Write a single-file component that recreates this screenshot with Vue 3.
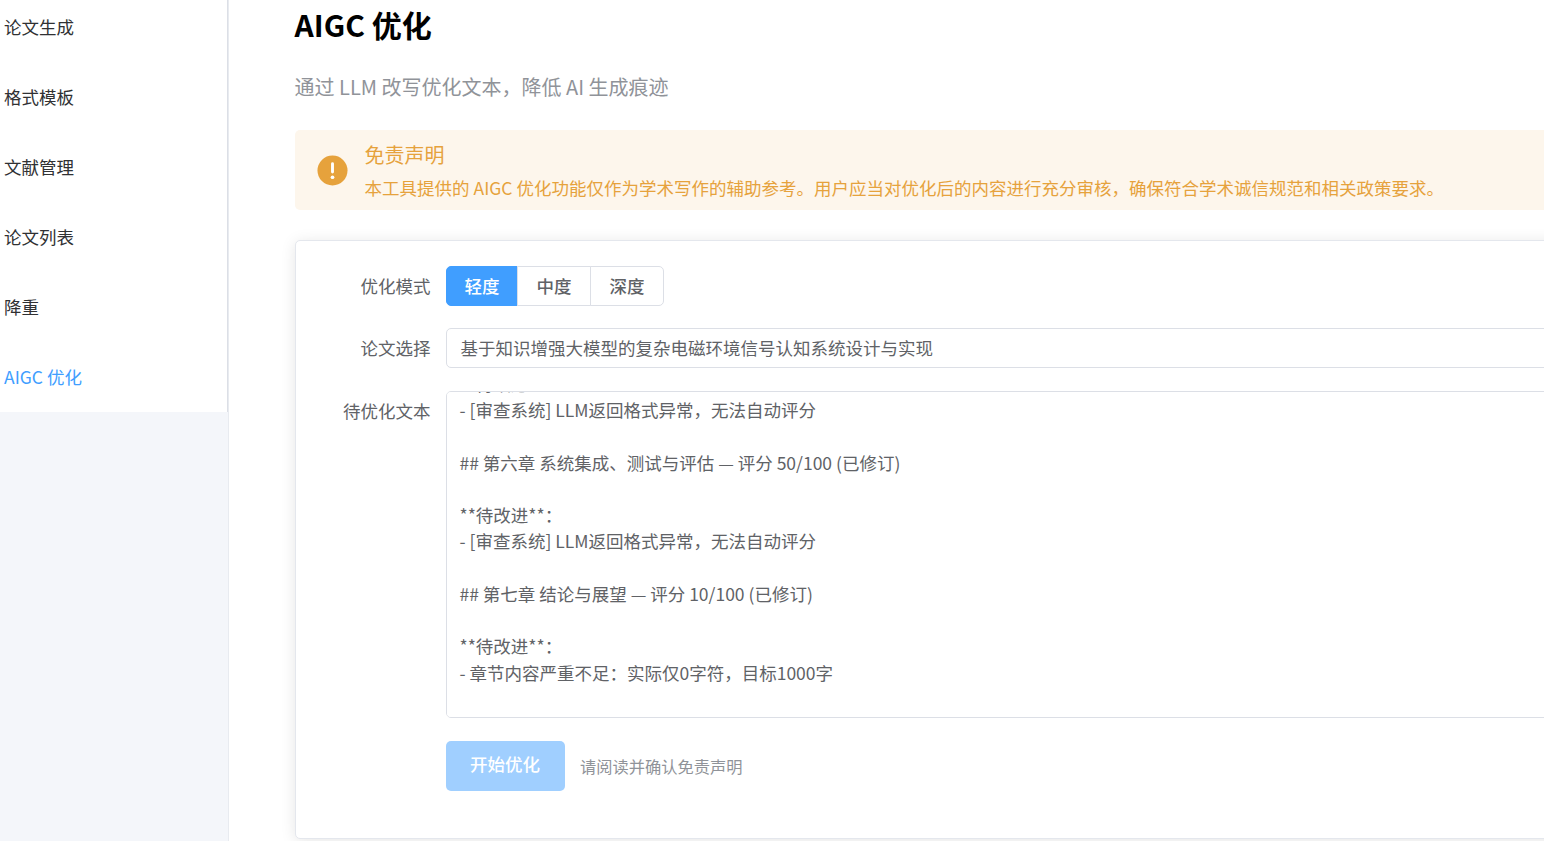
<template>
  <div class="layout">
    <!-- 侧边栏 -->
    <aside class="sidebar">
      <ul class="menu">
        <li
          v-for="item in menuItems"
          :key="item"
          class="menu-item"
          :class="{ 'is-active': item === activeMenu }"
        >
          {{ item }}
        </li>
      </ul>
    </aside>

    <!-- 主内容 -->
    <main class="main">
      <div class="page">
        <h1 class="page-title">AIGC 优化</h1>
        <p class="page-desc">通过 LLM 改写优化文本，降低 AI 生成痕迹</p>

        <div class="alert">
          <svg class="alert-icon" viewBox="0 0 32 32" aria-hidden="true">
            <circle cx="16" cy="16" r="15.5" fill="#e6a23c" />
            <rect x="14.5" y="7.5" width="3" height="11.5" rx="1.5" fill="#fff" />
            <circle cx="16" cy="23" r="1.9" fill="#fff" />
          </svg>
          <div class="alert-body">
            <div class="alert-title">免责声明</div>
            <div class="alert-text">
              本工具提供的 AIGC 优化功能仅作为学术写作的辅助参考。用户应当对优化后的内容进行充分审核，确保符合学术诚信规范和相关政策要求。
            </div>
          </div>
        </div>

        <div class="card">
          <div class="form-row">
            <label class="form-label">优化模式</label>
            <div class="segment">
              <button
                v-for="mode in modes"
                :key="mode"
                class="segment-btn"
                :class="{ 'is-active': mode === activeMode }"
                @click="activeMode = mode"
              >
                {{ mode }}
              </button>
            </div>
          </div>

          <div class="form-row form-row--select">
            <label class="form-label">论文选择</label>
            <div class="select">基于知识增强大模型的复杂电磁环境信号认知系统设计与实现</div>
          </div>

          <div class="form-row form-row--text">
            <label class="form-label">待优化文本</label>
            <textarea ref="textareaRef" v-model="content" class="textarea" rows="12"></textarea>
          </div>

          <div class="form-row form-row--last">
            <button class="submit-btn" disabled>开始优化</button>
            <span class="hint">请阅读并确认免责声明</span>
          </div>
        </div>
      </div>
    </main>
  </div>
</template>

<script setup>
import { onMounted, ref } from 'vue'

const menuItems = ['论文生成', '格式模板', '文献管理', '论文列表', '降重', 'AIGC 优化']
const activeMenu = 'AIGC 优化'

const modes = ['轻度', '中度', '深度']
const activeMode = ref('轻度')

const textareaRef = ref(null)
const content = ref(`
**待改进**：
- [审查系统] LLM返回格式异常，无法自动评分

## 第六章 系统集成、测试与评估 — 评分 50/100 (已修订)

**待改进**：
- [审查系统] LLM返回格式异常，无法自动评分

## 第七章 结论与展望 — 评分 10/100 (已修订)

**待改进**：
- 章节内容严重不足：实际仅0字符，目标1000字
`)

// 文本框默认滚动到底部
onMounted(() => {
  textareaRef.value.scrollTop = textareaRef.value.scrollHeight
})
</script>

<style>
html,
body {
  margin: 0;
  height: 100%;
  overflow: hidden;
  background: #fff;
}
</style>

<style scoped>
.layout {
  display: flex;
  height: 841px;
  overflow: hidden;
  font-family: "Noto Sans CJK SC", "Noto Sans", sans-serif;
  font-size: 17.5px;
  color: #606266;
}

/* 侧边栏 */
.sidebar {
  flex: 0 0 229px;
  overflow: hidden;
  background: #f4f6fa;
  border-right: 1px solid #e8ebf0;
  box-sizing: border-box;
}

.menu {
  list-style: none;
  margin: -8px 0 0;
  padding: 0;
  background: #fff;
  border-right: 1.5px solid #dcdfe6;
}

.menu-item {
  height: 70px;
  line-height: 70px;
  padding-left: 4px;
  color: #303133;
}

.menu-item.is-active {
  color: #409eff;
}

/* 主内容 */
.main {
  flex: 1;
  min-width: 0;
  overflow: hidden;
}

.page {
  width: 1400px;
  padding-left: 65.6px;
}

.page-title {
  margin: 0;
  padding-top: 2px;
  font-size: 30px;
  line-height: 44px;
  font-weight: 700;
  color: #000;
}

.page-desc {
  margin: 26px 0 0;
  font-size: 20px;
  line-height: 29px;
  color: #909399;
}

/* 提示条 */
.alert {
  display: flex;
  align-items: center;
  gap: 17px;
  height: 80px;
  margin-top: 29px;
  padding-left: 22px;
  box-sizing: border-box;
  background: #fdf6ec;
  border-radius: 5px;
  color: #e6a23c;
}

.alert-icon {
  flex: none;
  width: 31px;
  height: 31px;
}

.alert-title {
  font-size: 20px;
  line-height: 30px;
}

.alert-text {
  margin-top: 5px;
  line-height: 26px;
}

/* 表单卡片 */
.card {
  margin-top: 30px;
  padding: 25px;
  box-sizing: border-box;
  background: #fff;
  border: 1px solid #e4e7ed;
  border-radius: 5px;
  box-shadow: 0 2px 15px rgba(0, 0, 0, 0.1);
}

.form-row {
  display: flex;
  align-items: flex-start;
  margin-bottom: 22px;
}

.form-row--select {
  margin-bottom: 23px;
}

.form-row--text {
  margin-bottom: 23px;
}

.form-row--last {
  align-items: center;
  margin-bottom: 22px;
  padding-left: 125px;
}

.form-label {
  flex: 0 0 125px;
  box-sizing: border-box;
  padding-right: 15px;
  line-height: 39px;
  text-align: right;
}

.form-row--select .form-label {
  line-height: 40px;
}

/* 模式切换 */
.segment {
  display: flex;
  height: 40px;
  box-sizing: border-box;
}

.segment-btn {
  width: 74px;
  height: 40px;
  padding: 0 0 1px 1px;
  margin-left: -1px;
  font-family: "Noto Sans CJK SC Medium", "Noto Sans CJK SC", sans-serif;
  font-size: inherit;
  font-weight: 500;
  color: #606266;
  background: #fff;
  border: 1px solid #dcdfe6;
  cursor: pointer;
}

.segment-btn:first-child {
  width: 72px;
  margin-left: 0;
  border-radius: 5px 0 0 5px;
}

.segment-btn:last-child {
  border-radius: 0 5px 5px 0;
}

.segment-btn.is-active {
  color: #fff;
  background: #409eff;
  border-color: #409eff;
}

/* 输入控件 */
.select {
  flex: 1;
  height: 40px;
  padding: 0 14px;
  box-sizing: border-box;
  line-height: 37px;
  border: 1px solid #dcdfe6;
  border-radius: 5px;
}

.textarea {
  flex: 1;
  display: block;
  height: 327px;
  padding: 5.6px 12.9px 5px;
  box-sizing: border-box;
  font: inherit;
  line-height: 26.25px;
  color: #606266;
  border: 1px solid #dcdfe6;
  border-radius: 5px;
  outline: none;
  resize: none;
}

/* 提交区 */
.submit-btn {
  width: 119px;
  height: 50px;
  padding: 0 0 6px;
  font-family: "Noto Sans CJK SC Medium", "Noto Sans CJK SC", sans-serif;
  font-size: inherit;
  font-weight: 500;
  color: #fff;
  background: #a0cfff;
  border: none;
  border-radius: 5px;
  cursor: not-allowed;
}

.hint {
  margin-left: 15.4px;
  font-size: 16.25px;
  color: #909399;
}
</style>
